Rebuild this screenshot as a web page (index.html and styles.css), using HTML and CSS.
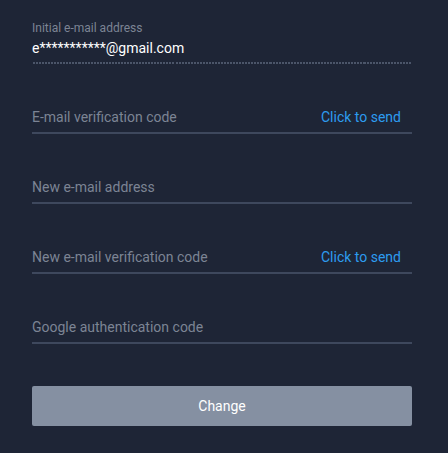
FILE: index.html
```html
<!DOCTYPE html>
<html lang="en">
<head>
<meta charset="utf-8">
<link rel="stylesheet" href="styles.css">
</head>
<body>
<form class="form">
  <div class="static-field">
    <div class="static-label">Initial e-mail address</div>
    <div class="static-value">e***********@gmail.com</div>
  </div>
  <div class="field">
    <input class="input" type="text" placeholder="E-mail verification code">
    <span class="send">Click to send</span>
  </div>
  <div class="field">
    <input class="input" type="text" placeholder="New e-mail address">
  </div>
  <div class="field">
    <input class="input" type="text" placeholder="New e-mail verification code">
    <span class="send">Click to send</span>
  </div>
  <div class="field">
    <input class="input" type="text" placeholder="Google authentication code">
  </div>
  <button class="submit" type="button">Change</button>
</form>
</body>
</html>
```
FILE: styles.css
```css
html, body {
  margin: 0;
  padding: 0;
  background: #1e2536;
  height: 100%;
}
body {
  font-family: Roboto, "Liberation Sans", sans-serif;
}
.form {
  padding: 20px 36px 0 32px;
  display: flex;
  flex-direction: column;
}
.static-field {
  display: flex;
  flex-direction: column;
  height: 42px;
  border-bottom: 2px solid transparent;
  border-image: repeating-linear-gradient(90deg, #4b5569 0 2px, transparent 2px 3px) 2;
}
.static-label {
  font-size: 12px;
  line-height: 16px;
  color: #7c8494;
}
.static-value {
  margin-top: 2px;
  font-size: 14px;
  line-height: 20px;
  color: #ffffff;
}
.field {
  margin-top: 38px;
  height: 30px;
  display: flex;
  align-items: center;
  border-bottom: 2px solid #3e485d;
  padding-right: 11px;
}
.input {
  flex: 1;
  min-width: 0;
  background: transparent;
  border: 0;
  outline: none;
  padding: 0;
  font-family: Roboto, "Liberation Sans", sans-serif;
  font-size: 14px;
  color: #ffffff;
  height: 20px;
}
.input::placeholder {
  color: #7c8494;
  opacity: 1;
}
.send {
  font-size: 14px;
  color: #2d9cf0;
  cursor: pointer;
}
.submit {
  margin-top: 42px;
  height: 40px;
  border: 0;
  border-radius: 2px;
  background: #8590a2;
  color: #ffffff;
  font-family: Roboto, "Liberation Sans", sans-serif;
  font-size: 14px;
  font-weight: 400;
}
```
